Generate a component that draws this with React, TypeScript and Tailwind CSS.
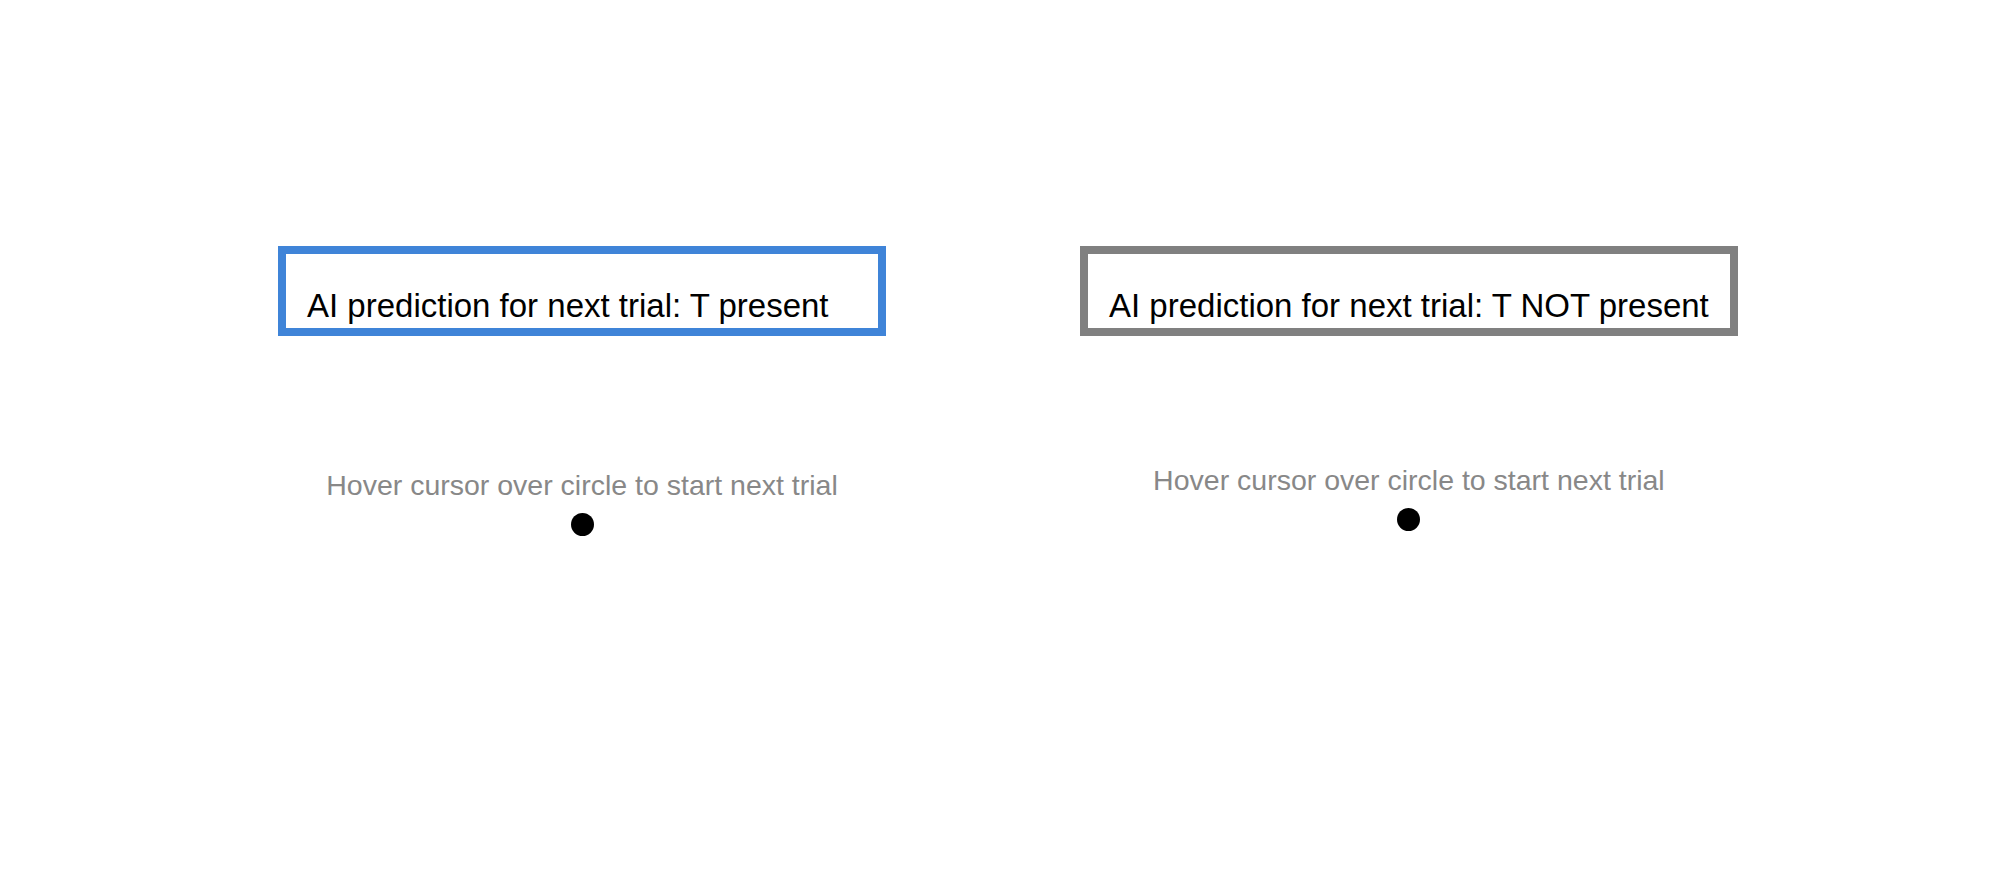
const font = { fontFamily: '"Liberation Sans", Arial, sans-serif' }

interface TrialColumnProps {
  label: string
  boxClass: string
  hintClass: string
}

function TrialColumn({ label, boxClass, hintClass }: TrialColumnProps) {
  return (
    <div className="flex flex-col items-center">
      <div className={`flex items-end h-[90px] border-8 bg-white pt-[35px] pb-[6px] ${boxClass}`}>
        <span className="text-[33px] leading-none text-black whitespace-nowrap">{label}</span>
      </div>
      <div className={`text-[28.5px] leading-none text-[#888888] whitespace-nowrap ${hintClass}`}>
        Hover cursor over circle to start next trial
      </div>
      <div className="mt-[13px] w-[23px] h-[23px] rounded-full bg-black" />
    </div>
  )
}

export default function App() {
  return (
    <div className="w-[2004px] h-[878px] bg-white overflow-hidden" style={font}>
      <div className="flex items-start gap-[194px] pt-[246px] pl-[278px]">
        <TrialColumn
          label="AI prediction for next trial: T present"
          boxClass="w-[608px] pl-[21px] border-[#3f84d8]"
          hintClass="mt-[135px]"
        />
        <TrialColumn
          label="AI prediction for next trial: T NOT present"
          boxClass="px-[21px] border-[#808080]"
          hintClass="mt-[130px]"
        />
      </div>
    </div>
  )
}
